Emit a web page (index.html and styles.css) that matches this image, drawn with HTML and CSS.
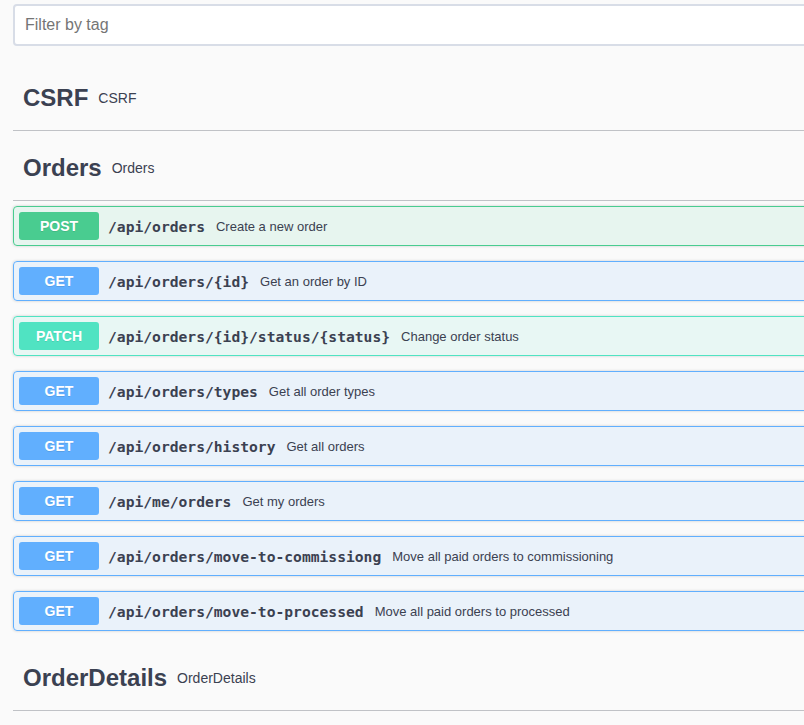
FILE: index.html
```html
<!DOCTYPE html>
<html>
<head>
<meta charset="utf-8">
<link rel="stylesheet" href="styles.css">
</head>
<body>
<div class="wrapper">
  <div class="filter">
    <input class="filter-input" type="text" placeholder="Filter by tag">
  </div>

  <div class="tag-section">
    <h3 class="tag"><span class="tag-name">CSRF</span><small class="tag-desc">CSRF</small></h3>
  </div>

  <div class="tag-section">
    <h3 class="tag"><span class="tag-name">Orders</span><small class="tag-desc">Orders</small></h3>
    <div class="ops">
      <div class="op op-post"><span class="method">POST</span><span class="path">/api/orders</span><span class="desc">Create a new order</span></div>
      <div class="op op-get"><span class="method">GET</span><span class="path">/api/orders/{id}</span><span class="desc">Get an order by ID</span></div>
      <div class="op op-patch"><span class="method">PATCH</span><span class="path">/api/orders/{id}/status/{status}</span><span class="desc">Change order status</span></div>
      <div class="op op-get"><span class="method">GET</span><span class="path">/api/orders/types</span><span class="desc">Get all order types</span></div>
      <div class="op op-get"><span class="method">GET</span><span class="path">/api/orders/history</span><span class="desc">Get all orders</span></div>
      <div class="op op-get"><span class="method">GET</span><span class="path">/api/me/orders</span><span class="desc">Get my orders</span></div>
      <div class="op op-get"><span class="method">GET</span><span class="path">/api/orders/move-to-commissiong</span><span class="desc">Move all paid orders to commissioning</span></div>
      <div class="op op-get"><span class="method">GET</span><span class="path">/api/orders/move-to-processed</span><span class="desc">Move all paid orders to processed</span></div>
    </div>
  </div>

  <div class="tag-section">
    <h3 class="tag"><span class="tag-name">OrderDetails</span><small class="tag-desc">OrderDetails</small></h3>
  </div>
</div>
</body>
</html>
```

FILE: styles.css
```css
html, body {
  margin: 0;
  padding: 0;
  overflow: hidden;
  background: #fafafa;
}
body {
  font-family: "Liberation Sans", Arial, sans-serif;
  color: #3b4151;
}
.wrapper {
  width: 1200px;
  padding: 4px 0 0 13px;
}
.filter {
  margin: 0 0 20px;
}
.filter-input {
  display: block;
  box-sizing: border-box;
  width: 100%;
  height: 42px;
  margin: 0;
  padding: 8px 10px;
  border: 2px solid #d8dde7;
  border-radius: 4px;
  background: #fff;
  font-family: "Liberation Sans", Arial, sans-serif;
  font-size: 16px;
  color: #3b4151;
  outline: none;
}
.filter-input::placeholder {
  color: #757575;
}
.tag {
  box-sizing: border-box;
  display: flex;
  align-items: center;
  height: 65px;
  margin: 0 0 5px;
  padding: 0 20px 0 10px;
  border-bottom: 1px solid rgba(59, 65, 81, 0.3);
  font-weight: 700;
}
.tag-name {
  font-size: 24px;
}
.tag-desc {
  font-size: 14px;
  font-weight: 400;
  padding: 0 10px;
}
.ops {
  display: flex;
  flex-direction: column;
  gap: 15px;
  margin-bottom: 15px;
}
.op {
  display: flex;
  align-items: center;
  height: 40px;
  box-sizing: border-box;
  padding: 5px;
  border: 1px solid;
  border-radius: 4px;
  box-shadow: 0 0 3px rgba(0, 0, 0, 0.19);
}
.op-post {
  background: rgba(73, 204, 144, 0.1);
  border-color: #49cc90;
}
.op-get {
  background: rgba(97, 175, 254, 0.1);
  border-color: #61affe;
}
.op-patch {
  background: rgba(80, 227, 194, 0.1);
  border-color: #50e3c2;
}
.method {
  min-width: 80px;
  height: 28px;
  line-height: 28px;
  text-align: center;
  border-radius: 3px;
  color: #fff;
  font-size: 14px;
  font-weight: 700;
  text-shadow: 0 1px 0 rgba(0, 0, 0, 0.1);
}
.op-post .method { background: #49cc90; }
.op-get .method { background: #61affe; }
.op-patch .method { background: #50e3c2; }
.path {
  padding: 0 11px 0 9px;
  font-family: "DejaVu Sans Mono", "Liberation Mono", monospace;
  font-size: 14.65px;
  font-weight: 700;
  color: #3b4151;
}
.desc {
  font-size: 13px;
  color: #3b4151;
}
```
